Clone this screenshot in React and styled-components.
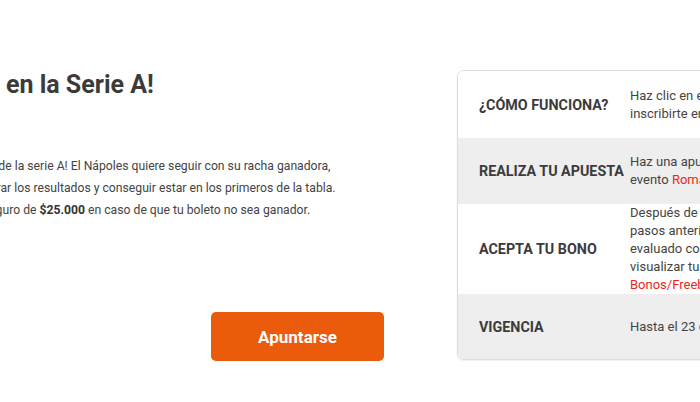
import styled, { createGlobalStyle } from 'styled-components';

const GlobalStyle = createGlobalStyle`
  html, body {
    margin: 0;
    padding: 0;
    background: #FFFFFF;
    overflow: hidden;
  }
  body {
    font-family: Roboto, 'Liberation Sans', sans-serif;
    color: #444444;
  }
`;

const Page = styled.div`
  display: flex;
  flex-direction: row;
  align-items: flex-start;
  width: 1100px;
  margin-left: -181px;
`;

const PromoColumn = styled.div`
  display: flex;
  flex-direction: column;
  width: 638px;
  padding-top: 70px;
`;

const Title = styled.h1`
  margin: 0;
  font-size: 25px;
  line-height: 29px;
  font-weight: 700;
  color: #3b3b3b;
  white-space: nowrap;
`;

const Description = styled.p`
  margin: 56px 0 0;
  font-size: 12.2px;
  line-height: 22px;
  color: #444444;
  white-space: nowrap;

  strong {
    font-weight: 700;
    color: #333333;
  }
`;

const ButtonRow = styled.div`
  display: flex;
  padding-left: 392px;
  margin-top: 91px;
`;

const JoinButton = styled.button`
  width: 173px;
  height: 49px;
  border: none;
  border-radius: 5px;
  background: #EA5B0C;
  color: #FFFFFF;
  font-family: Roboto, 'Liberation Sans', sans-serif;
  font-size: 17px;
  font-weight: 700;
  cursor: pointer;
`;

const InfoTable = styled.div`
  display: flex;
  flex-direction: column;
  width: 420px;
  margin-top: 70px;
  border: 1px solid #dddddd;
  border-radius: 7px;
  overflow: hidden;
  box-shadow: 0 1px 2px rgba(0, 0, 0, 0.08);
`;

const InfoRow = styled.div`
  display: flex;
  align-items: center;
  min-height: ${(p) => p.$height}px;
  background: ${(p) => (p.$shaded ? '#eeeeee' : '#ffffff')};
`;

const InfoLabel = styled.div`
  flex: 0 0 151px;
  padding-left: 21px;
  font-size: 14.3px;
  font-weight: 700;
  color: #3b3b3b;
  text-transform: uppercase;
  white-space: nowrap;
`;

const InfoText = styled.div`
  flex: 1;
  font-size: 13px;
  line-height: 18px;
  color: #444444;
  white-space: nowrap;
`;

const Highlight = styled.span`
  color: #e8281e;
`;

export default function App() {
  return (
    <>
      <GlobalStyle />
      <Page>
        <PromoColumn>
          <Title>¡Vive el Nápoles en la Serie A!</Title>
          <Description>
            ¡Disfruta de los mejores partidos de la serie A! El Nápoles quiere seguir con su racha ganadora,
            <br />
            apuesta por tu equipo, para mejorar los resultados y conseguir estar en los primeros de la tabla.
            <br />
            Además, también obtienes un seguro de <strong>$25.000</strong> en caso de que tu boleto no sea ganador.
          </Description>
          <ButtonRow>
            <JoinButton>Apuntarse</JoinButton>
          </ButtonRow>
        </PromoColumn>

        <InfoTable>
          <InfoRow $height={67}>
            <InfoLabel>¿Cómo funciona?</InfoLabel>
            <InfoText>
              Haz clic en el botón Apuntarse para
              <br />
              inscribirte en la promoción.
            </InfoText>
          </InfoRow>
          <InfoRow $height={66} $shaded>
            <InfoLabel>Realiza tu apuesta</InfoLabel>
            <InfoText>
              Haz una apuesta de mínimo $10.000 en el
              <br />
              evento <Highlight>Roma vs Nápoles</Highlight>.
            </InfoText>
          </InfoRow>
          <InfoRow $height={90}>
            <InfoLabel>Acepta tu bono</InfoLabel>
            <InfoText>
              Después de cumplir con los
              <br />
              pasos anteriores, tu boleto será
              <br />
              evaluado con el resultado y podrás
              <br />
              visualizar tu bono en la sección
              <br />
              <Highlight>Bonos/Freebets</Highlight>.
            </InfoText>
          </InfoRow>
          <InfoRow $height={65} $shaded>
            <InfoLabel>Vigencia</InfoLabel>
            <InfoText>Hasta el 23 de octubre de 2023.</InfoText>
          </InfoRow>
        </InfoTable>
      </Page>
    </>
  );
}
